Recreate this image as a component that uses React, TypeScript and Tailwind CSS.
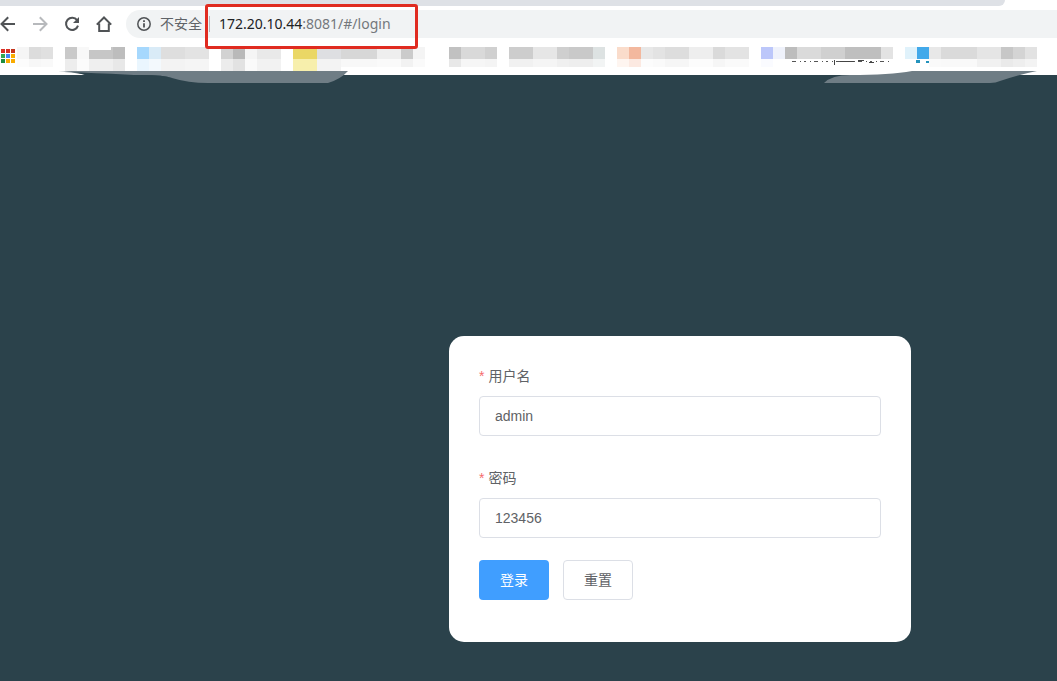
import { useState } from "react"
import type { FormEvent } from "react"

type Tile = [x: number, width: number, top: string, bottom: string]

// Mosaic over the bookmark titles, two rows of 12px tiles
const tiles: Tile[] = [
  [17, 12, "#f5f5f5", "#fcfcfc"],
  [29, 12, "#dcdcdc", "#f7f7f7"],
  [41, 12, "#e0e0e0", "#f9f9f9"],
  [65, 12, "#c9c9c9", "#ededed"],
  [77, 12, "#f8f8f8", "#fbfbfb"],
  [89, 24, "#c6c6c6", "#efefef"],
  [113, 12, "#bdbdbd", "#e8e8e8"],
  [137, 12, "#a6d8fd", "#eaf6fe"],
  [149, 12, "#d9ebf7", "#f3f9fd"],
  [161, 24, "#dedede", "#f3f3f3"],
  [185, 24, "#e3e3e3", "#f5f5f5"],
  [221, 12, "#d2d2d2", "#ececec"],
  [233, 12, "#b9b9b9", "#e2e2e2"],
  [245, 12, "#f5f5f5", "#fafafa"],
  [257, 24, "#e9e9e9", "#f2f2f2"],
  [293, 24, "#ead765", "#f7efac"],
  [317, 24, "#dedfe2", "#f3f3f3"],
  [341, 36, "#d7d7d7", "#f8f8f8"],
  [377, 24, "#eeeeee", "#fafafa"],
  [401, 12, "#cbcbcb", "#f2f2f2"],
  [413, 12, "#f4f4f4", "#fafafa"],
  [449, 12, "#c1c1c1", "#e8e8e8"],
  [461, 24, "#d9d9d9", "#f6f6f6"],
  [485, 12, "#d0d0d0", "#f4f4f4"],
  [509, 24, "#cdcdcd", "#f1f1f1"],
  [533, 24, "#e6e6e6", "#f5f5f5"],
  [557, 12, "#cfcfcf", "#f0f0f0"],
  [569, 24, "#c9c9c9", "#eeeeee"],
  [593, 12, "#dde2e2", "#f2f4f4"],
  [617, 12, "#fadccb", "#fef5f0"],
  [629, 12, "#f3b89e", "#fce9e1"],
  [641, 12, "#e8e8e8", "#fcfcfc"],
  [653, 12, "#e3e3e3", "#fafafa"],
  [665, 24, "#dddddd", "#f6f6f6"],
  [689, 24, "#eeeeee", "#fcfcfc"],
  [713, 12, "#dadada", "#f6f6f6"],
  [725, 24, "#e3e3e3", "#fafafa"],
  [761, 12, "#bcc7fa", "#fafbff"],
  [773, 12, "#eff2fb", "#ffffff"],
  [785, 12, "#bdbdbd", "#ffffff"],
  [797, 24, "#dadada", "#ffffff"],
  [821, 24, "#d0d0d0", "#ffffff"],
  [845, 36, "#bfbfbf", "#ffffff"],
  [881, 12, "#e3e3e3", "#ffffff"],
  [905, 12, "#e0f2fb", "#ffffff"],
  [917, 12, "#42a9ea", "#ffffff"],
  [929, 12, "#e8e8e8", "#fafafa"],
  [941, 36, "#dadada", "#f9f9f9"],
  [977, 24, "#e5e5e5", "#f1f1f1"],
  [1001, 12, "#c7c7c7", "#eaeaea"],
  [1013, 12, "#d4d4d4", "#eeeeee"],
  [1025, 12, "#e2e2e2", "#f3f3f3"],
]

const appDots = [
  ["#d93025", "#d93025", "#c5351c"],
  ["#34a853", "#4285f4", "#f9ab00"],
  ["#1e8e3e", "#f9ab00", "#f9ab00"],
]

function ToolbarIcons() {
  return (
    <div className="flex items-center gap-4 text-[#505356]">
      <button type="button" aria-label="后退" className="size-4">
        <svg viewBox="0 0 16 16" className="size-4" fill="none" stroke="currentColor" strokeWidth="2">
          <path d="M15 8H2M8.2 1.3 1.5 8l6.7 6.7" />
        </svg>
      </button>
      <button type="button" aria-label="前进" className="size-4 text-[#b7b9bc]">
        <svg viewBox="0 0 16 16" className="size-4" fill="none" stroke="currentColor" strokeWidth="2">
          <path d="M1 8h13M7.8 1.3 14.5 8l-6.7 6.7" />
        </svg>
      </button>
      <button type="button" aria-label="重新加载" className="size-4">
        <svg viewBox="0 0 16 16" className="size-4" fill="none" stroke="currentColor" strokeWidth="2">
          <path d="M13.1 4.2A6.1 6.1 0 1 0 14 9.6" />
          <path d="M15 1v6H9z" fill="currentColor" stroke="none" />
        </svg>
      </button>
      <button type="button" aria-label="主页" className="size-4">
        <svg viewBox="0 0 16 16" className="size-4" fill="none" stroke="currentColor" strokeWidth="2">
          <path d="M.8 8.6 8 1.5l7.2 7.1M3.2 7.4V15h9.6V7.4" />
        </svg>
      </button>
    </div>
  )
}

function AddressBar() {
  return (
    <div className="flex h-7 flex-1 items-center rounded-l-full bg-[#f1f3f4] pl-[11px] text-[14px] leading-5">
      <svg viewBox="0 0 14 14" className="size-3.5 text-[#505356]" fill="none" stroke="currentColor" strokeWidth="1.5">
        <circle cx="7" cy="7" r="6.2" />
        <path d="M7 6.2v4.4M7 3.3v1.8" strokeWidth="1.8" />
      </svg>
      <span className="ml-[9px] text-[#5f6368]">不安全</span>
      <div className="relative ml-[7px] flex h-7 items-center">
        <span className="h-4 w-px bg-[#b4b7bb]" />
        <span className="ml-[9px] font-['Noto_Sans',sans-serif] text-[#74787c]">
          <span className="text-[#202124]">172.20.10.44</span>:8081/#/login
        </span>
        <span className="absolute -top-1.5 -left-1 h-[45px] w-[213px] rounded-[3px] border-3 border-[#e02b20]" />
      </div>
    </div>
  )
}

function BookmarkBar() {
  return (
    <div className="h-[34px] overflow-hidden">
      <svg width="1057" height="34" viewBox="0 41 1057 34" shapeRendering="crispEdges" aria-hidden="true">
        {tiles.map(([x, width, top, bottom]) => (
          <g key={x}>
            <rect x={x} y="47" width={width} height="12" fill={top} />
            <rect x={x} y="59" width={width} height={x > 60 && x < 340 ? 12 : 8} fill={bottom} />
          </g>
        ))}
        <path d="M89 47h22v3H89z" fill="#fff" />
        {appDots.map((row, r) =>
          row.map((fill, c) => <rect key={`${r}-${c}`} x={1 + c * 5} y={49 + r * 5} width="4" height="4" fill={fill} />)
        )}
        {/* Lower edge of a title that the mosaic leaves uncovered */}
        <path d="M792 61.5h98" stroke="#555" strokeDasharray="4 4 1 3 2 4 1 3" />
        <path d="M834.5 60v5M840 61.5h14M858 60.5h6M869 62.5h5" stroke="#444" />
        <path d="M916 60h4v3h-4zM926 61h3v2h-3z" fill="#2493bd" />
      </svg>
    </div>
  )
}

function BrowserChrome() {
  return (
    <header className="relative bg-white">
      <div className="h-1.5 pr-[52px]">
        <div className="h-1.5 rounded-br-md bg-[#dee1e6]" />
      </div>
      <div className="flex h-[35px] items-center gap-[14px]">
        <ToolbarIcons />
        <AddressBar />
      </div>
      <BookmarkBar />
      {/* Brush strokes left along the edge of the page */}
      <svg width="1057" height="16" viewBox="0 70 1057 16" className="absolute top-[70px] left-0" aria-hidden="true">
        <path d="M58 71h290q-7 8-20 12H208q-20 0-36-5-8-3-30-3H85q-6-3-27-4z" fill="#6f7d85" />
        <path d="M824 83q8-8 26-8 40 0 62-4h125q-20 4-37 10-4 2-10 2z" fill="#6f7d85" />
        <path d="M64 72q15 1 21 3h57q22 0 30 3-40-4-108-6z" fill="#2b424b" />
      </svg>
    </header>
  )
}

function LoginForm() {
  const [username, setUsername] = useState("admin")
  const [password, setPassword] = useState("123456")

  const reset = () => {
    setUsername("admin")
    setPassword("123456")
  }

  const inputClass =
    "block h-10 w-full rounded border border-[#dcdfe6] bg-white px-[15px] text-[#606266] outline-none focus:border-[#409eff]"

  return (
    <form
      onSubmit={(e: FormEvent) => e.preventDefault()}
      className="w-[462px] rounded-[15px] bg-white px-[30px] pt-[30px] pb-[42px] text-[14px] leading-5 text-[#606266]"
    >
      <label htmlFor="username" className="mb-2.5 flex gap-1">
        <span className="text-[#f56c6c]">*</span>
        用户名
      </label>
      <input
        id="username"
        type="text"
        value={username}
        onChange={(e) => setUsername(e.target.value)}
        className={inputClass}
      />
      <label htmlFor="password" className="mt-8 mb-2.5 flex gap-1">
        <span className="text-[#f56c6c]">*</span>
        密码
      </label>
      <input
        id="password"
        type="text"
        value={password}
        onChange={(e) => setPassword(e.target.value)}
        className={inputClass}
      />
      <div className="mt-[22px] flex gap-3.5">
        <button type="submit" className="h-10 w-[70px] rounded bg-[#409eff] text-white">
          登录
        </button>
        <button type="button" onClick={reset} className="h-10 w-[70px] rounded border border-[#dcdfe6] bg-white">
          重置
        </button>
      </div>
    </form>
  )
}

export default function App() {
  return (
    <div className="flex min-h-screen flex-col overflow-x-hidden bg-[#2b424b] font-['Liberation_Sans','Noto_Sans_CJK_SC',sans-serif]">
      <BrowserChrome />
      <main className="flex flex-1 items-start justify-end pt-[261px] pr-[146px]">
        <LoginForm />
      </main>
    </div>
  )
}
